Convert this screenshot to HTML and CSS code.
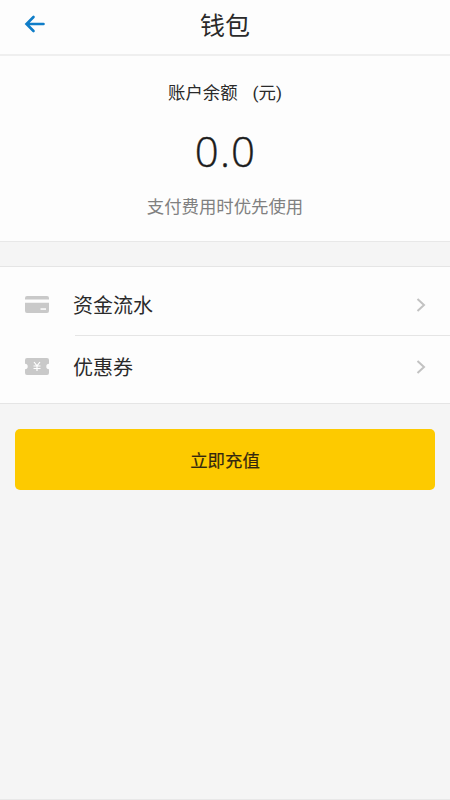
FILE: index.html
```html
<!DOCTYPE html>
<html lang="zh-CN">
<head>
<meta charset="utf-8">
<title>钱包</title>
<link rel="stylesheet" href="styles.css">
</head>
<body>
<header class="bar">
  <svg class="back" viewBox="0 0 22 18"><path d="M9.500 2 2.500 9l7 7M3 9H19.500"/></svg>
  <h1 class="title">钱包</h1>
</header>
<section class="balance">
  <div class="label"><span>账户余额</span><span>(元)</span></div>
  <div class="amount">0.0</div>
  <div class="hint">支付费用时优先使用</div>
</section>
<nav class="menu">
  <a class="row">
    <svg class="icon" viewBox="0 0 24 17"><path fill="#c9c9c9" d="M2 0h20q2 0 2 2v1.500H0V2q0-2 2-2zM0 6.700h24V15q0 2-2 2H2q-2 0-2-2z"/><path fill="#fff" d="M15.500 12.300h5.500v1.500h-5.500z"/></svg>
    <span class="name">资金流水</span>
    <svg class="chevron" viewBox="0 0 10 14"><path d="M1.500 1 8 7l-6.500 6"/></svg>
  </a>
  <a class="row second">
    <svg class="icon" viewBox="0 0 24 17"><path fill="#c9c9c9" d="M2 0h20q2 0 2 2v3.800a2.700 2.700 0 0 0 0 5.400V15q0 2-2 2H2q-2 0-2-2v-3.800a2.700 2.700 0 0 0 0-5.400V2q0-2 2-2z"/><path class="yen" d="m9 4 3 3.800L15 4M12 7.800V13M8.500 8h7M8.500 10.500h7"/></svg>
    <span class="name">优惠券</span>
    <svg class="chevron" viewBox="0 0 10 14"><path d="M1.500 1 8 7l-6.500 6"/></svg>
  </a>
</nav>
<button class="pay">立即充值</button>
</body>
</html>
```
FILE: styles.css
```css
* { box-sizing: border-box; }
body { margin: 0; height: 800px; overflow: hidden; background: #f5f5f5; border-bottom: 1px solid #e8e8e8; color: #2a2a2a; font-family: Roboto, "Noto Sans CJK SC", sans-serif; display: flex; flex-direction: column; }
.bar { height: 56px; background: #fdfdfd; border-bottom: 2px solid #efefef; display: grid; grid-template-columns: 70px 1fr 70px; align-items: center; padding-bottom: 6px; }
.back { width: 22px; height: 18px; margin-left: 24px; fill: none; stroke: #0f7dc8; stroke-width: 2.6; stroke-linecap: round; }
.title { margin: 0; text-align: center; font-size: 25px; line-height: 36px; font-weight: 400; padding-top: 5px; }
.balance { height: 186px; background: #fdfdfd; border-bottom: 1px solid #e8e8e8; text-align: center; padding-top: 25px; }
.label { display: flex; justify-content: center; gap: 15px; font-size: 17.400px; line-height: 24px; }
.amount { font-family: "Open Sans", sans-serif; font-weight: 300; font-size: 42px; letter-spacing: 1.2px; line-height: 50px; margin-top: 21px; padding-left: 1px; color: #1c1c1c; -webkit-text-stroke: 0.4px #1c1c1c; }
.hint { color: #808080; font-size: 17.400px; line-height: 26px; margin-top: 18px; }
.menu { margin-top: 24px; height: 138px; background: #fdfdfd; border-top: 1px solid #e5e5e5; border-bottom: 1px solid #e5e5e5; }
.row { display: flex; align-items: center; height: 68px; padding: 7px 24px 0 25px; }
.icon { width: 24px; height: 17px; margin-right: 24px; }
.yen { fill: none; stroke: #fff; stroke-width: 1.2; }
.name { flex: 1; font-size: 20px; line-height: 28px; padding-top: 2px; }
.chevron { width: 10px; height: 14px; fill: none; stroke: #c2c2c2; stroke-width: 2; }
.second { height: 68px; padding: 0 24px 5px 25px; background: linear-gradient(#e5e5e5, #e5e5e5) 75px 0 / 100% 1px no-repeat; }
.pay { margin: 25px 15px 0; padding: 3px 0 0; height: 61px; border: 0; border-radius: 5px; background: #fdca00; color: #33270f; font: 400 17.400px/24px Roboto, "Noto Sans CJK SC", sans-serif; -webkit-text-stroke: 0.2px #33270f; }
```
